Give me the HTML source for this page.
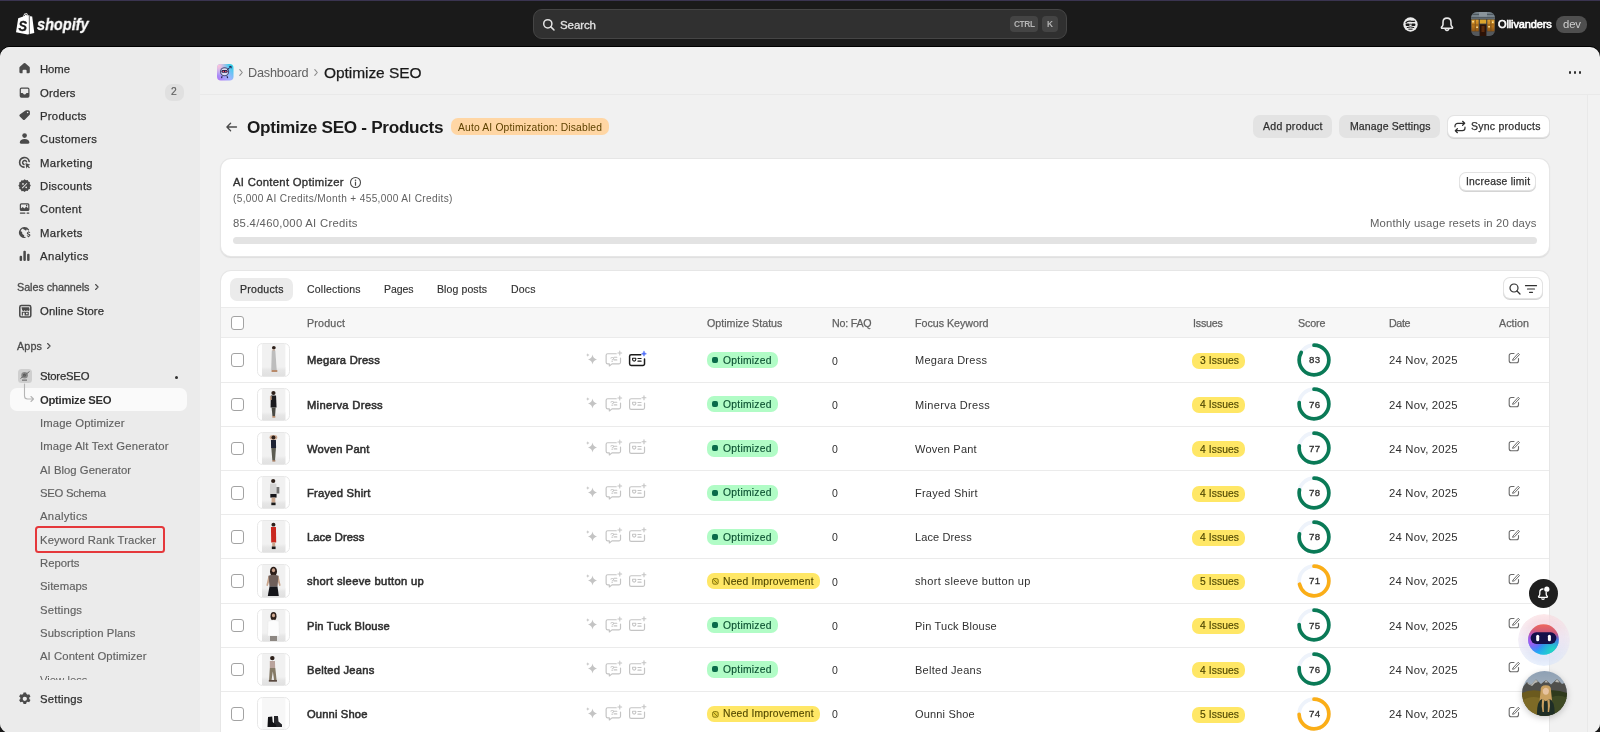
<!DOCTYPE html>
<html><head><meta charset="utf-8"><title>Optimize SEO</title>
<style>
html,body{margin:0;padding:0}
body{width:1600px;height:732px;overflow:hidden;background:#1a1a1a;position:relative;font-family:"Liberation Sans",sans-serif;}
.t{position:absolute;height:20px;line-height:20px;white-space:nowrap;will-change:transform;}
.a{position:absolute;}
svg{position:absolute;overflow:visible}
.cb{position:absolute;width:11px;height:11.5px;border:1px solid #a3a3a3;border-radius:3px;background:#fff;box-sizing:content-box}
.th{position:absolute;left:257px;width:31px;height:31.4px;border:1px solid #e8e8e8;border-radius:5.5px;background:#fff;overflow:hidden;box-sizing:content-box}
.bd{position:absolute;height:17px;border-radius:7px;}
.rl{position:absolute;left:221px;width:1328px;height:1px;background:#ebebeb}
</style></head>
<body>
<div class="a" style="left:0;top:0;width:1600px;height:1px;background:#3a3450"></div>
<svg style="left:15px;top:12px;will-change:transform" width="20" height="24" viewBox="0 0 20 24">
<path d="M3.2 6.2 L8.2 4.4 C8.6 2.2 9.8 1.0 11.0 1.0 C12.0 1.0 12.6 1.8 12.9 3.4 L14.2 3.1 L15.2 4.2 L17.2 4.5 L19.3 21.0 L12.6 22.5 L1.0 20.3 Z" fill="#fff"/>
<path d="M14.3 3.2 L14.4 22.1" stroke="#1a1a1a" stroke-width="0.7"/>
<path d="M9.3 4.0 C9.6 2.8 10.3 2.0 10.9 2.0 C11.4 2.0 11.8 2.6 11.9 3.3" stroke="#1a1a1a" stroke-width="0.8" fill="none"/>
<text transform="translate(3.6 18.6) scale(0.82 1)" font-family="Liberation Sans" font-weight="700" font-style="italic" font-size="15.5" fill="#1a1a1a" stroke="#1a1a1a" stroke-width=".4">S</text>
</svg>
<div class="t" id="t1" style="font-size:16.6px;color:#fff;top:14.60px;font-weight:700;left:37.00px;-webkit-text-stroke:0.3px #fff;font-style:italic;transform-origin:0 50%;transform:scaleX(0.875);">shopify</div>
<div class="a" style="left:533px;top:9px;width:532px;height:28.3px;background:#303030;border:1px solid #454545;border-radius:9px"></div>
<svg style="left:542px;top:17.7px" width="14" height="14" viewBox="0 0 14 14"><circle cx="5.8" cy="5.8" r="4.1" fill="none" stroke="#e3e3e3" stroke-width="1.5"/><path d="M8.9 8.9 L12 12" stroke="#e3e3e3" stroke-width="1.5" stroke-linecap="round"/></svg>
<div class="t" id="t2" style="font-size:11.5px;color:#e3e3e3;top:14.50px;left:560.00px;letter-spacing:-0.087px;-webkit-text-stroke:0.3px #e3e3e3;">Search</div>
<div class="a" style="left:1010px;top:16px;width:28px;height:16px;background:#444;border-radius:4px"></div>
<div class="a" style="left:1042px;top:16px;width:16px;height:16px;background:#444;border-radius:4px"></div>
<div class="t" id="t3" style="font-size:8.3px;color:#b5b5b5;top:14.30px;font-weight:700;left:1013.50px;letter-spacing:-0.375px;">CTRL</div>
<div class="t" id="t4" style="font-size:8.3px;color:#b5b5b5;top:14.30px;font-weight:700;left:1047.30px;">K</div>
<svg style="left:1402.5px;top:16.5px" width="15" height="15" viewBox="0 0 15 15">
<circle cx="7.500" cy="7.500" r="7.200" fill="#ececec"/>
<path d="M3 5.700 Q4.500 3.500 7.800 4.200 Q10.500 4.700 11.600 4.200" stroke="#1a1a1a" stroke-width="1.200" fill="none" stroke-linecap="round"/>
<rect x="2.600" y="6.500" width="4" height="2.500" rx="1" fill="#1a1a1a"/><rect x="8.400" y="6.500" width="4" height="2.500" rx="1" fill="#1a1a1a"/><path d="M6.600 7.200 H8.400" stroke="#1a1a1a" stroke-width=".8"/>
<path d="M3.800 10.600 Q7.500 9.300 11.200 10.600" stroke="#1a1a1a" stroke-width="1" fill="none"/><path d="M5.800 12.200 H9.200" stroke="#1a1a1a" stroke-width="1" stroke-linecap="round"/>
</svg>
<svg style="left:1439px;top:16px" width="16" height="17" viewBox="0 0 16 17">
<path d="M8 2.100 C5.500 2.100 4 3.900 4 6.200 V8.400 C4 9.500 3.300 10.300 2.600 11.100 C2.200 11.600 2.500 12.300 3.200 12.300 H12.800 C13.500 12.300 13.800 11.600 13.400 11.100 C12.700 10.300 12 9.500 12 8.400 V6.200 C12 3.900 10.500 2.100 8 2.100 Z" fill="none" stroke="#e8e8e8" stroke-width="1.550" stroke-linejoin="round"/>
<path d="M6.300 13.300 Q8 15.700 9.700 13.300" stroke="#e8e8e8" stroke-width="1.500" fill="none" stroke-linecap="round"/>
</svg>
<svg style="left:1471px;top:11.800px" width="24" height="24" viewBox="0 0 24 24"><defs><clipPath id="sac"><rect width="24" height="24" rx="6"/></clipPath>
<linearGradient id="wg" x1="0" y1="0" x2="0" y2="1"><stop offset="0" stop-color="#e0a030"/><stop offset=".5" stop-color="#c07a1a"/><stop offset="1" stop-color="#8a5214"/></linearGradient></defs>
<g clip-path="url(#sac)"><rect width="24" height="24" fill="#3a3f45"/>
<rect width="24" height="7" fill="#76828a"/><rect y="1.800" width="24" height="1.200" fill="#4e585f"/><rect y="5" width="24" height="1.600" fill="#515a61"/><rect x="8" y="0" width="8" height="4.500" fill="#8a949b"/>
<rect x=".5" y="7.600" width="7.200" height="12" fill="url(#wg)"/><rect x="16.300" y="7.600" width="7.200" height="12" fill="url(#wg)"/>
<rect x="8.800" y="7.600" width="6.400" height="4" fill="#dca42c"/><rect x="8.800" y="12.500" width="6.400" height="11.500" fill="#2c1206"/><rect x="10.500" y="14" width="3" height="6" fill="#5a2a0c"/>
<rect x="3.800" y="7.600" width=".8" height="12" fill="#6a4a20"/><rect x="19.500" y="7.600" width=".8" height="12" fill="#6a4a20"/><rect x=".5" y="12.500" width="7.200" height=".8" fill="#8a5a1c"/><rect x="16.300" y="12.500" width="7.200" height=".8" fill="#8a5a1c"/>
<rect x="1.300" y="9" width="1.500" height="1.500" fill="#ffe9a0"/><rect x="5.300" y="14.500" width="1.500" height="1.500" fill="#ffe9a0"/><rect x="17.300" y="14" width="1.500" height="1.500" fill="#ffe9a0"/><rect x="21" y="9.500" width="1.500" height="1.500" fill="#ffe9a0"/>
<rect x="0" y="19.600" width="8.200" height="4.400" fill="#54585c"/><rect x="15.800" y="19.600" width="8.200" height="4.400" fill="#54585c"/>
</g></svg>
<div class="t" id="t5" style="font-size:11px;color:#fff;top:13.60px;left:1498.30px;letter-spacing:-0.123px;-webkit-text-stroke:0.6px #fff;">Ollivanders</div>
<div class="a" style="left:1556.3px;top:16.2px;width:30.4px;height:16.5px;background:#4f4f4f;border-radius:8px"></div>
<div class="t" id="t6" style="font-size:11.3px;color:#cfcfcf;top:13.60px;left:1562.50px;letter-spacing:-0.109px;">dev</div>
<div class="a" style="left:0;top:46px;width:1600px;height:40px;background:#000;border-radius:10px 10px 0 0"></div>
<div class="a" style="left:0;top:47px;width:1600px;height:686.3px;background:#f1f1f1;border-radius:10px 10px 10px 10px;overflow:hidden">
<div class="a" style="left:0;top:0;width:200px;height:690px;background:#ebebeb"></div>
<div class="a" style="left:200px;top:47px;width:1400px;height:1px;background:#e9e9e9"></div>
<div class="a" style="left:1587px;top:48px;width:13px;height:645px;background:#f2f2f2;border-left:1px solid #e9e9e9"></div>
</div>
<svg style="left:16.40px;top:60.30px" width="17.2" height="17.2" viewBox="0 0 20 20" fill="#4a4a4a"><path d="M9.1 3.9 a1.4 1.4 0 0 1 1.8 0 l4.6 3.9 a1.6 1.6 0 0 1 .55 1.2 v4.9 a1.6 1.6 0 0 1-1.6 1.6 h-1.4 a.7.7 0 0 1-.7-.7 v-2.3 a1.3 1.3 0 0 0-1.3-1.3 h-2.1 a1.3 1.3 0 0 0-1.3 1.3 v2.3 a.7.7 0 0 1-.7.7 h-1.4 a1.6 1.6 0 0 1-1.6-1.6 v-4.9 a1.6 1.6 0 0 1 .55-1.2 Z"/></svg>
<div class="t" id="t7" style="font-size:11.3px;color:#303030;top:59.40px;left:40.00px;letter-spacing:-0.047px;-webkit-text-stroke:0.25px #303030;">Home</div>
<svg style="left:16.40px;top:83.60px" width="17.2" height="17.2" viewBox="0 0 20 20" fill="#4a4a4a"><path fill-rule="evenodd" d="M4.3 6 a2 2 0 0 1 2-2 h7.4 a2 2 0 0 1 2 2 v8 a2 2 0 0 1-2 2 h-7.4 a2 2 0 0 1-2-2 Z M5.7 6.2 v4.3 h1.9 a.8.8 0 0 1 .75.55 a1.7 1.7 0 0 0 3.3 0 a.8.8 0 0 1 .75-.55 h1.9 V6.2 a.8.8 0 0 0-.8-.8 h-7 a.8.8 0 0 0-.8.8 Z"/></svg>
<div class="t" id="t8" style="font-size:11.3px;color:#303030;top:82.70px;left:40.00px;letter-spacing:0.194px;-webkit-text-stroke:0.25px #303030;">Orders</div>
<svg style="left:16.40px;top:107.00px" width="17.2" height="17.2" viewBox="0 0 20 20" fill="#4a4a4a"><path fill-rule="evenodd" d="M10.6 4.4 a1.8 1.8 0 0 1 1.3-.55 h2.5 a1.8 1.8 0 0 1 1.8 1.8 v2.5 a1.8 1.8 0 0 1-.55 1.3 l-5.2 5.2 a1.8 1.8 0 0 1-2.5 0 l-3.5-3.5 a1.8 1.8 0 0 1 0-2.5 Z M13.5 7.4 a.9.9 0 1 0 0-1.8 a.9.9 0 0 0 0 1.8 Z"/></svg>
<div class="t" id="t9" style="font-size:11.3px;color:#303030;top:106.10px;left:40.00px;letter-spacing:0.272px;-webkit-text-stroke:0.25px #303030;">Products</div>
<svg style="left:16.40px;top:130.30px" width="17.2" height="17.2" viewBox="0 0 20 20" fill="#4a4a4a"><circle cx="10" cy="6.5" r="2.7"/><path d="M4.4 14.6 c0-2.6 2.4-4.1 5.6-4.1 s5.6 1.5 5.6 4.1 c0 .8-.6 1.4-1.4 1.4 h-8.4 c-.8 0-1.4-.6-1.4-1.4 Z"/></svg>
<div class="t" id="t10" style="font-size:11.3px;color:#303030;top:129.40px;left:40.00px;letter-spacing:0.297px;-webkit-text-stroke:0.25px #303030;">Customers</div>
<svg style="left:16.40px;top:153.60px" width="17.2" height="17.2" viewBox="0 0 20 20" fill="#4a4a4a"><path fill="none" stroke="#4a4a4a" stroke-width="1.9" stroke-linecap="round" d="M15.3 8.6 a5.6 5.6 0 1 0-6 6.7"/><path fill="none" stroke="#4a4a4a" stroke-width="1.7" stroke-linecap="round" d="M12.3 9 a2.4 2.4 0 1 0-3 3.2"/><path d="M11 10.6 l5.6 2 l-2.4 1.1 l2 2 l-1 1 l-2-2 l-1.1 2.4 Z"/></svg>
<div class="t" id="t11" style="font-size:11.3px;color:#303030;top:152.70px;left:40.00px;letter-spacing:0.361px;-webkit-text-stroke:0.25px #303030;">Marketing</div>
<svg style="left:16.40px;top:177.00px" width="17.2" height="17.2" viewBox="0 0 20 20" fill="#4a4a4a"><path transform="translate(10 10) scale(1.1) translate(-10 -10)" fill-rule="evenodd" d="M10 3.2 l1.5 1.1 l1.8-.25 l.7 1.7 l1.7.7 l-.25 1.8 L16.6 10 l-1.1 1.5 l.25 1.8 l-1.7.7 l-.7 1.7 l-1.8-.25 L10 16.8 l-1.5-1.1 l-1.8.25 l-.7-1.7 l-1.7-.7 l.25-1.8 L3.4 10 l1.1-1.5 l-.25-1.8 l1.7-.7 l.7-1.7 l1.8.25 Z M8.3 9.1 a.9.9 0 1 0 0-1.8 a.9.9 0 0 0 0 1.8 Z M11.7 12.7 a.9.9 0 1 0 0-1.8 a.9.9 0 0 0 0 1.8 Z M12.2 7.2 l.7.7 l-5.1 5.1 l-.7-.7 Z"/></svg>
<div class="t" id="t12" style="font-size:11.3px;color:#303030;top:176.10px;left:40.00px;letter-spacing:0.299px;-webkit-text-stroke:0.25px #303030;">Discounts</div>
<svg style="left:16.40px;top:200.30px" width="17.2" height="17.2" viewBox="0 0 20 20" fill="#4a4a4a"><path fill-rule="evenodd" d="M4.4 5.6 a1.8 1.8 0 0 1 1.8-1.8 h7.6 a1.8 1.8 0 0 1 1.8 1.8 v5.4 a1.8 1.8 0 0 1-1.8 1.8 h-7.6 a1.8 1.8 0 0 1-1.8-1.8 Z M5.8 9.9 l2-1.7 l2 1.7 l2.3-2.2 l2.1 2.2 v-4.1 a.6.6 0 0 0-.6-.6 h-7.2 a.6.6 0 0 0-.6.6 Z M12.4 7.2 a.8.8 0 1 0 0-1.6 a.8.8 0 0 0 0 1.6 Z"/><rect x="4.4" y="14.4" width="6.6" height="1.5" rx=".7"/><rect x="12.2" y="14.4" width="3.4" height="1.5" rx=".7"/></svg>
<div class="t" id="t13" style="font-size:11.3px;color:#303030;top:199.40px;left:40.00px;letter-spacing:0.320px;-webkit-text-stroke:0.25px #303030;">Content</div>
<svg style="left:16.40px;top:223.60px" width="17.2" height="17.2" viewBox="0 0 20 20" fill="#4a4a4a"><path fill-rule="evenodd" d="M9.6 3.6 a6.4 6.4 0 1 0 .9 12.75 a.7.7 0 0 0-.1-1.4 a5 5 0 0 1-.9.05 c-.3-.7.3-1.3 0-2 c-.3-.7-1.5-.8-2-1.5 c-.5-.7 0-1.6-.5-2.3 c-.3-.5-1-.7-1.7-.7 a5 5 0 0 1 2.8-3.2 c.2.6.6 1.1 1.3 1.2 c.9.1 1 .9 1.7 1 c.8.1 1.200-.6 1.4-1.5 a5 5 0 0 1 1.500 1.300 a.7.7 0 0 0 1.150-.8 A6.4 6.4 0 0 0 9.6 3.600 Z"/><path d="M14.300 8.300 v.700 c-.9.100-1.700.700-1.700 1.700 c0 1.100.9 1.500 1.800 1.700 c.7.200 1 .300 1 .700 c0 .400-.4.600-.9.600 c-.6 0-.9-.200-1.100-.700 l-1 .400 c.200.700.800 1.200 1.600 1.300 v.700 h1 v-.700 c1-.100 1.700-.800 1.700-1.700 c0-1.100-.9-1.500-1.800-1.700 c-.7-.200-1-.300-1-.700 c0-.300.300-.600.800-.600 s.8.200.9.600 l1-.400 c-.200-.600-.700-1.100-1.400-1.200 v-.700 Z"/></svg>
<div class="t" id="t14" style="font-size:11.3px;color:#303030;top:222.70px;left:40.00px;letter-spacing:0.385px;-webkit-text-stroke:0.25px #303030;">Markets</div>
<svg style="left:16.40px;top:247.00px" width="17.2" height="17.2" viewBox="0 0 20 20" fill="#4a4a4a"><rect x="4.200" y="10.300" width="2.900" height="6" rx="1.2"/><rect x="8.550" y="4.300" width="2.900" height="12" rx="1.2"/><rect x="12.900" y="7.800" width="2.900" height="8.500" rx="1.2"/></svg>
<div class="t" id="t15" style="font-size:11.3px;color:#303030;top:246.10px;left:40.00px;letter-spacing:0.410px;-webkit-text-stroke:0.25px #303030;">Analytics</div>
<div class="a" style="left:165px;top:84px;width:19px;height:17px;background:#e0e0e0;border-radius:7px"></div>
<div class="t" id="t16" style="font-size:10.3px;color:#616161;top:82.30px;left:171.30px;-webkit-text-stroke:0.2px #616161;">2</div>
<div class="t" id="t17" style="font-size:10.8px;color:#4a4a4a;top:277.00px;left:16.50px;letter-spacing:-0.056px;-webkit-text-stroke:0.3px #4a4a4a;">Sales channels</div>
<svg style="left:93px;top:283px" width="8" height="8" viewBox="0 0 8 8"><path d="M2.600 1.500 L5.100 4 L2.600 6.500" fill="none" stroke="#4a4a4a" stroke-width="1.100" stroke-linecap="round" stroke-linejoin="round"/></svg>
<svg style="left:14.70px;top:300.60px" width="20.6" height="20.6" viewBox="0 0 20 20" fill="#4a4a4a"><path fill-rule="evenodd" d="M3.900 6 a2.300 2.300 0 0 1 2.300-2.300 h7.600 a2.300 2.300 0 0 1 2.300 2.300 v8 a2.300 2.300 0 0 1-2.300 2.300 h-7.600 a2.300 2.300 0 0 1-2.300-2.300 Z M5.400 6 v8 a.8.8 0 0 0 .8.8 h7.600 a.8.8 0 0 0 .8-.8 v-8 a.8.8 0 0 0-.8-.8 h-7.600 a.8.8 0 0 0-.8.8 Z"/><path d="M6.300 6.100 h7.400 l.5 2.300 a1.250 1.250 0 0 1-2.450.300 a1.250 1.250 0 0 1-2.450 0 a1.250 1.250 0 0 1-2.450-.300 Z"/><path fill-rule="evenodd" d="M6.600 10.400 h6.800 v3.800 h-6.800 Z M7.700 11.400 v2.800 h1.600 v-2.800 Z M10.700 11.400 v1.500 h1.600 v-1.500 Z"/></svg>
<div class="t" id="t18" style="font-size:11.3px;color:#303030;top:301.00px;left:40.00px;letter-spacing:0.109px;-webkit-text-stroke:0.25px #303030;">Online Store</div>
<div class="t" id="t19" style="font-size:10.8px;color:#4a4a4a;top:336.00px;left:16.50px;letter-spacing:0.130px;-webkit-text-stroke:0.3px #4a4a4a;">Apps</div>
<svg style="left:45px;top:342px" width="8" height="8" viewBox="0 0 8 8"><path d="M2.600 1.500 L5.100 4 L2.600 6.500" fill="none" stroke="#4a4a4a" stroke-width="1.100" stroke-linecap="round" stroke-linejoin="round"/></svg>
<svg style="left:18px;top:369px" width="14" height="14" viewBox="0 0 14 14"><rect width="14" height="14" rx="3.500" fill="#cfcfcf"/><circle cx="6.600" cy="6.300" r="3.300" fill="#8a8a8a"/><circle cx="6.600" cy="6.100" r="1.700" fill="#5a5a5a"/><path d="M2.500 9.500 L11.500 2.500" stroke="#6a6a6a" stroke-width="1"/><rect x="4" y="10.500" width="5" height="1.300" fill="#777"/></svg>
<div class="t" id="t20" style="font-size:11.3px;color:#303030;top:366.00px;left:40.00px;letter-spacing:-0.194px;-webkit-text-stroke:0.25px #303030;">StoreSEO</div>
<div class="a" style="left:174.500px;top:375.700px;width:3px;height:3px;border-radius:2px;background:#303030"></div>
<div class="a" style="left:10px;top:388px;width:177px;height:23px;background:#fafafa;border-radius:7px"></div>
<svg style="left:20px;top:384px" width="16" height="20" viewBox="0 0 16 20"><path d="M4.500 0 V12 a3 3 0 0 0 3 3 H13.500 M11 12.500 L13.500 15 L11 17.500" fill="none" stroke="#b5b5b5" stroke-width="1.100" stroke-linecap="round" stroke-linejoin="round"/></svg>
<div class="t" id="t21" style="font-size:11.3px;color:#303030;top:389.50px;font-weight:700;left:40.00px;letter-spacing:-0.291px;">Optimize SEO</div>
<div class="t" id="t22" style="font-size:11.3px;color:#616161;top:413.10px;left:40.00px;letter-spacing:0.116px;-webkit-text-stroke:0.15px #616161;">Image Optimizer</div>
<div class="t" id="t23" style="font-size:11.3px;color:#616161;top:436.40px;left:40.00px;letter-spacing:0.162px;-webkit-text-stroke:0.15px #616161;">Image Alt Text Generator</div>
<div class="t" id="t24" style="font-size:11.3px;color:#616161;top:459.70px;left:40.00px;letter-spacing:0.035px;-webkit-text-stroke:0.15px #616161;">AI Blog Generator</div>
<div class="t" id="t25" style="font-size:11.3px;color:#616161;top:483.10px;left:40.00px;letter-spacing:-0.273px;-webkit-text-stroke:0.15px #616161;">SEO Schema</div>
<div class="t" id="t26" style="font-size:11.3px;color:#616161;top:506.40px;left:40.00px;letter-spacing:0.285px;-webkit-text-stroke:0.15px #616161;">Analytics</div>
<div class="t" id="t27" style="font-size:11.3px;color:#616161;top:529.70px;left:40.00px;letter-spacing:0.091px;-webkit-text-stroke:0.15px #616161;">Keyword Rank Tracker</div>
<div class="t" id="t28" style="font-size:11.3px;color:#616161;top:553.00px;left:40.00px;letter-spacing:-0.010px;-webkit-text-stroke:0.15px #616161;">Reports</div>
<div class="t" id="t29" style="font-size:11.3px;color:#616161;top:576.30px;left:40.00px;letter-spacing:0.058px;-webkit-text-stroke:0.15px #616161;">Sitemaps</div>
<div class="t" id="t30" style="font-size:11.3px;color:#616161;top:599.70px;left:40.00px;letter-spacing:0.167px;-webkit-text-stroke:0.15px #616161;">Settings</div>
<div class="t" id="t31" style="font-size:11.3px;color:#616161;top:623.00px;left:40.00px;letter-spacing:0.113px;-webkit-text-stroke:0.15px #616161;">Subscription Plans</div>
<div class="t" id="t32" style="font-size:11.3px;color:#616161;top:646.30px;left:40.00px;letter-spacing:0.086px;-webkit-text-stroke:0.15px #616161;">AI Content Optimizer</div>
<div class="a" style="left:40px;top:669.7px;width:80px;height:10.5px;overflow:hidden"><div class="t" style="left:0;top:0;font-size:11.3px;color:#616161">View less</div></div>
<div class="a" style="left:34.5px;top:526.3px;width:126.6px;height:22.6px;border:2.2px solid #e5383b;border-radius:3.5px"></div>
<svg style="left:15.20px;top:689.20px" width="19.6" height="19.6" viewBox="0 0 20 20" fill="#4a4a4a"><path fill-rule="evenodd" d="M8.700 3.500 h2.600 l.4 1.700 a5 5 0 0 1 1.100.65 l1.700-.5 l1.300 2.250 l-1.250 1.200 a5 5 0 0 1 0 1.300 l1.250 1.200 l-1.300 2.250 l-1.700-.5 a5 5 0 0 1-1.100.65 l-.4 1.700 h-2.600 l-.4-1.700 a5 5 0 0 1-1.100-.65 l-1.700.5 l-1.300-2.250 l1.250-1.200 a5 5 0 0 1 0-1.300 l-1.250-1.200 l1.300-2.250 l1.700.5 a5 5 0 0 1 1.100-.65 Z M10 12.200 a2.200 2.200 0 1 0 0-4.400 a2.200 2.200 0 0 0 0 4.400 Z"/></svg>
<div class="t" id="t33" style="font-size:11.3px;color:#303030;top:688.70px;left:40.00px;letter-spacing:0.239px;-webkit-text-stroke:0.25px #303030;">Settings</div>
<svg style="left:216.8px;top:64.2px" width="16.5" height="16.5" viewBox="0 0 17 17"><defs><linearGradient id="ag" x1="0" y1="1" x2="1" y2="0"><stop offset="0" stop-color="#b06cf2"/><stop offset=".45" stop-color="#9fb4ff"/><stop offset="1" stop-color="#1fd6e4"/></linearGradient><radialGradient id="ag2" cx="0.1" cy="0.1" r="0.6"><stop offset="0" stop-color="#ffc2d8"/><stop offset="1" stop-color="#ffc2d8" stop-opacity="0"/></radialGradient></defs>
<rect width="17" height="17" rx="4" fill="url(#ag)"/><rect width="17" height="17" rx="4" fill="url(#ag2)"/>
<circle cx="7.800" cy="8" r="4.700" fill="#4a4a78"/><circle cx="7.800" cy="8" r="3.600" fill="#d9dcf0"/><rect x="4.600" y="6.300" width="6.400" height="2.800" rx="1.400" fill="#1c1a4a"/><circle cx="6.500" cy="7.700" r=".8" fill="#ff5a6a"/><circle cx="9.100" cy="7.700" r=".8" fill="#ff5a6a"/>
<path d="M10.500 6 L14.500 2.600 M12.600 2.500 H14.600 V4.500" stroke="#26224f" stroke-width="1" fill="none"/><path d="M5.300 12.600 L4.600 14.600 M10.300 12.600 L11 14.600" stroke="#26224f" stroke-width="1.200"/></svg>
<svg style="left:237px;top:68px" width="8" height="9" viewBox="0 0 8 9"><path d="M2.800 1.700 L5.300 4.500 L2.800 7.300" fill="none" stroke="#8a8a8a" stroke-width="1.100" stroke-linecap="round" stroke-linejoin="round"/></svg>
<div class="t" id="t34" style="font-size:12.7px;color:#616161;top:63.00px;left:248.00px;letter-spacing:-0.197px;">Dashboard</div>
<svg style="left:312px;top:68px" width="8" height="9" viewBox="0 0 8 9"><path d="M2.800 1.700 L5.300 4.500 L2.800 7.300" fill="none" stroke="#8a8a8a" stroke-width="1.100" stroke-linecap="round" stroke-linejoin="round"/></svg>
<div class="t" id="t35" style="font-size:15.5px;color:#1a1a1a;top:62.50px;left:324.00px;letter-spacing:-0.064px;-webkit-text-stroke:0.25px #1a1a1a;">Optimize SEO</div>
<div class="a" style="left:1568.5px;top:71.300px;width:2.400px;height:2.400px;border-radius:2px;background:#303030"></div>
<div class="a" style="left:1573.5px;top:71.300px;width:2.400px;height:2.400px;border-radius:2px;background:#303030"></div>
<div class="a" style="left:1578.5px;top:71.300px;width:2.400px;height:2.400px;border-radius:2px;background:#303030"></div>
<svg style="left:225px;top:120.500px" width="13" height="12" viewBox="0 0 13 12"><path d="M11.500 6 H2 M5.600 2.300 L1.900 6 L5.600 9.700" fill="none" stroke="#4a4a4a" stroke-width="1.300" stroke-linecap="round" stroke-linejoin="round"/></svg>
<div class="t" id="t36" style="font-size:17.2px;color:#1a1a1a;top:116.80px;font-weight:700;left:247.00px;letter-spacing:-0.315px;">Optimize SEO - Products</div>
<div class="a" style="left:451px;top:117.500px;width:157.500px;height:17.500px;background:#ffd6a4;border-radius:7px"></div>
<div class="t" id="t37" style="font-size:10.3px;color:#5e4200;top:117.50px;left:457.50px;letter-spacing:0.169px;">Auto AI Optimization: Disabled</div>
<div class="a" style="left:1253px;top:115.2px;width:79px;height:22.7px;background:#e3e3e3;border-radius:7px"></div>
<div class="t" id="t38" style="font-size:10.5px;color:#303030;top:115.70px;left:1263.00px;letter-spacing:0.287px;-webkit-text-stroke:0.25px #303030;">Add product</div>
<div class="a" style="left:1338.9px;top:115.2px;width:101px;height:22.7px;background:#e3e3e3;border-radius:7px"></div>
<div class="t" id="t39" style="font-size:10.5px;color:#303030;top:115.70px;left:1349.50px;letter-spacing:0.121px;-webkit-text-stroke:0.25px #303030;">Manage Settings</div>
<div class="a" style="left:1448px;top:116.1px;width:101px;height:20.9px;background:#fff;border-radius:6px;box-shadow:0 0 0 1px #e3e3e3,0 1px 0 1px #d4d4d4"></div>
<svg style="left:1453px;top:119.500px" width="14" height="14" viewBox="0 0 14 14"><g fill="none" stroke="#303030" stroke-width="1.200" stroke-linecap="round" stroke-linejoin="round"><path d="M2 6.800 V6 a2.700 2.700 0 0 1 2.700-2.700 H11.500 M9.600 1.300 L11.700 3.300 L9.600 5.300"/><path d="M12 7.200 V8 a2.700 2.700 0 0 1-2.700 2.700 H2.500 M4.400 8.700 L2.300 10.700 L4.400 12.700"/></g></svg>
<div class="t" id="t40" style="font-size:10.5px;color:#303030;top:115.70px;left:1470.50px;letter-spacing:0.246px;-webkit-text-stroke:0.25px #303030;">Sync products</div>
<div class="a" style="left:221px;top:159px;width:1328px;height:96.500px;background:#fff;border-radius:10px;box-shadow:0 0 0 1px #e6e6e6,0 1px 1px 1px #dedede"></div>
<div class="t" id="t41" style="font-size:11.3px;color:#303030;top:172.00px;left:233.00px;letter-spacing:0.297px;-webkit-text-stroke:0.35px #303030;">AI Content Optimizer</div>
<svg style="left:348.500px;top:175.500px" width="13" height="13" viewBox="0 0 13 13"><circle cx="6.500" cy="6.500" r="5" fill="none" stroke="#4a4a4a" stroke-width="1.100"/><circle cx="6.500" cy="4.200" r=".8" fill="#4a4a4a"/><path d="M6.500 6 V9.200" stroke="#4a4a4a" stroke-width="1.200" stroke-linecap="round"/></svg>
<div class="t" id="t42" style="font-size:10.1px;color:#616161;top:188.90px;left:233.00px;letter-spacing:0.353px;">(5,000 AI Credits/Month + 455,000 AI Credits)</div>
<div class="t" id="t43" style="font-size:11.3px;color:#616161;top:213.30px;left:233.00px;letter-spacing:0.292px;">85.4/460,000 AI Credits</div>
<div class="a" style="left:1460.2px;top:173.4px;width:75.3px;height:17px;background:#fff;border-radius:6px;box-shadow:0 0 0 1px #e3e3e3,0 1px 0 1px #d4d4d4"></div>
<div class="t" id="t44" style="font-size:10.3px;color:#303030;top:171.70px;left:1466.00px;letter-spacing:0.257px;-webkit-text-stroke:0.25px #303030;">Increase limit</div>
<div class="t" id="t45" style="font-size:11.3px;color:#616161;top:213.20px;right:63.50px;letter-spacing:0.149px;">Monthly usage resets in 20 days</div>
<div class="a" style="left:233px;top:237px;width:1303.500px;height:6.500px;background:#e3e3e3;border-radius:3.500px"></div>
<div class="a" style="left:221px;top:271px;width:1328px;height:470px;background:#fff;border-radius:10px 10px 0 0;box-shadow:0 0 0 1px #e6e6e6"></div>
<div class="a" style="left:230px;top:278px;width:63px;height:23px;background:#ebebeb;border-radius:7px"></div>
<div class="t" id="t46" style="font-size:10.5px;color:#303030;top:279.20px;left:240.00px;letter-spacing:0.295px;-webkit-text-stroke:0.25px #303030;">Products</div>
<div class="t" id="t47" style="font-size:10.5px;color:#303030;top:279.20px;left:306.50px;letter-spacing:0.214px;-webkit-text-stroke:0.15px #303030;">Collections</div>
<div class="t" id="t48" style="font-size:10.5px;color:#303030;top:279.20px;left:384.00px;letter-spacing:-0.070px;-webkit-text-stroke:0.15px #303030;">Pages</div>
<div class="t" id="t49" style="font-size:10.5px;color:#303030;top:279.20px;left:437.00px;letter-spacing:0.108px;-webkit-text-stroke:0.15px #303030;">Blog posts</div>
<div class="t" id="t50" style="font-size:10.5px;color:#303030;top:279.20px;left:511.00px;letter-spacing:0.188px;-webkit-text-stroke:0.15px #303030;">Docs</div>
<div class="a" style="left:1504.2px;top:278.2px;width:37.6px;height:20.2px;background:#fff;border-radius:6px;box-shadow:0 0 0 1px #e3e3e3,0 1px 0 1px #d4d4d4"></div>
<svg style="left:1508px;top:282px" width="14" height="14" viewBox="0 0 14 14"><circle cx="6" cy="6" r="4" fill="none" stroke="#303030" stroke-width="1.200"/><path d="M9 9 L12 12" stroke="#303030" stroke-width="1.200" stroke-linecap="round"/></svg>
<svg style="left:1524px;top:282px" width="14" height="14" viewBox="0 0 14 14"><path d="M1.500 3.700 H12.500 M3.500 7 H10.500 M5.500 10.300 H8.500" stroke="#303030" stroke-width="1.200" stroke-linecap="round"/></svg>
<div class="a" style="left:221px;top:307px;width:1328px;height:31.2px;background:#f7f7f7;border-top:1px solid #ebebeb;border-bottom:1px solid #ebebeb;box-sizing:border-box"></div>
<div class="cb" style="left:231px;top:316px"></div>
<div class="t" id="t51" style="font-size:10.7px;color:#616161;top:313.20px;left:306.50px;letter-spacing:0.176px;-webkit-text-stroke:0.25px #616161;">Product</div>
<div class="t" id="t52" style="font-size:10.7px;color:#616161;top:313.20px;left:706.50px;letter-spacing:-0.003px;-webkit-text-stroke:0.25px #616161;">Optimize Status</div>
<div class="t" id="t53" style="font-size:10.7px;color:#616161;top:313.20px;left:831.50px;letter-spacing:-0.231px;-webkit-text-stroke:0.25px #616161;">No: FAQ</div>
<div class="t" id="t54" style="font-size:10.7px;color:#616161;top:313.20px;left:915.00px;letter-spacing:-0.021px;-webkit-text-stroke:0.25px #616161;">Focus Keyword</div>
<div class="t" id="t55" style="font-size:10.7px;color:#616161;top:313.20px;left:1192.50px;letter-spacing:-0.198px;-webkit-text-stroke:0.25px #616161;">Issues</div>
<div class="t" id="t56" style="font-size:10.7px;color:#616161;top:313.20px;left:1297.50px;letter-spacing:-0.130px;-webkit-text-stroke:0.25px #616161;">Score</div>
<div class="t" id="t57" style="font-size:10.7px;color:#616161;top:313.20px;left:1388.50px;letter-spacing:-0.393px;-webkit-text-stroke:0.25px #616161;">Date</div>
<div class="t" id="t58" style="font-size:10.7px;color:#616161;top:313.20px;left:1499.00px;letter-spacing:0.036px;-webkit-text-stroke:0.25px #616161;">Action</div>
<svg width="0" height="0" style="left:0;top:0"><defs><linearGradient id="fl" x1="0" y1="0" x2="0" y2="1"><stop offset="0" stop-color="#f1f1f1"/><stop offset=".35" stop-color="#e6e6e6"/><stop offset="1" stop-color="#e0e0e0"/></linearGradient></defs></svg>
<div class="cb" style="left:231px;top:353.40px"></div>
<div class="th" style="top:343.30px"><svg style="left:3.800px;top:0" width="23.400" height="31.400" viewBox="0 0 23.400 31.400"><rect width="23.400" height="31.400" fill="#f1f1f1"/><rect y="23" width="23.4" height="9" fill="url(#fl)"/><g transform="translate(11.700 0) scale(1.250 1) translate(-11.700 0)"><ellipse cx="11.8" cy="3.7" rx="1.5" ry="1.8" fill="#2e211b"/><rect x="10.7" y="5.5" width="2" height="6" fill="#c9a58c"/><path d="M10.2 6.6 L13 6.6 L14.1 26 L9.7 26 Z" fill="#bdbdbd"/><rect x="10" y="26" width="4.6" height="2" fill="#b88a6a"/></g></svg></div>
<div class="t" id="t59" style="font-size:11.2px;color:#303030;top:350.30px;left:306.70px;letter-spacing:0.230px;-webkit-text-stroke:0.55px #303030;">Megara Dress</div>
<svg style="left:585px;top:352.00px" width="14" height="14" viewBox="0 0 14 14" fill="#c4c4c4"><path d="M7.500 2.500 Q8 6.500 12 7.500 Q8 8.500 7.500 12.500 Q7 8.500 3 7.500 Q7 6.500 7.500 2.500 Z"/><path d="M2.800 1.200 Q3 2.800 4.600 3 Q3 3.200 2.800 4.800 Q2.600 3.200 1 3 Q2.600 2.800 2.800 1.200 Z"/></svg>
<svg style="left:604.4px;top:350.40px" width="19.2" height="19.2" viewBox="0 0 18 18" fill="none" stroke="#c4c4c4" stroke-width="1.100" stroke-linejoin="round" stroke-linecap="round"><path d="M11.500 3.500 H3.500 a1.500 1.500 0 0 0-1.500 1.500 v6.500 a1.500 1.500 0 0 0 1.500 1.500 h1.500 v2 l2.500-2 h6.500 a1.500 1.500 0 0 0 1.500-1.500 v-4"/><path d="M9.500 6.800 H12 M9.500 9.300 H12"/><path d="M14.800 1 V4.600 M13 2.800 H16.600" stroke-width="1"/></svg>
<div class="t" style="left:609.500px;top:349.50px;font-size:7.500px;color:#c4c4c4;font-weight:700">?</div>
<svg style="left:627.6px;top:350.60px" width="19.2" height="19.2" viewBox="0 0 18 18" fill="none" stroke="#1a1a1a" stroke-width="1.4" stroke-linejoin="round" stroke-linecap="round"><path d="M12 3.500 H3 a1.500 1.500 0 0 0-1.500 1.500 v7 a1.500 1.500 0 0 0 1.500 1.500 h11 a1.500 1.500 0 0 0 1.500-1.500 v-4.500"/><path d="M4.300 6.800 h3 v1.200 a1.500 1.500 0 0 1-3 0 Z M9.300 7 H12.300 M9.300 9.500 H12.300" stroke-width="1"/><path d="M15 0.300 Q15.300 2.300 17.300 2.600 Q15.300 2.900 15 4.900 Q14.700 2.900 12.700 2.600 Q14.700 2.300 15 0.300 Z" fill="#4f6ff7" stroke="#4f6ff7" stroke-width=".5"/></svg>
<div class="bd" style="left:706.7px;top:352.00px;width:71.4px;height:16.3px;background:#b1fcc6"></div>
<div class="a" style="left:711.500px;top:357.00px;width:6px;height:6px;border-radius:1.900px;background:#0a6b4a"></div>
<div class="t" id="t60" style="font-size:10.3px;color:#0c5132;top:350.70px;left:723.00px;letter-spacing:0.268px;-webkit-text-stroke:0.15px #0c5132;">Optimized</div>
<div class="t" id="t61" style="font-size:10.5px;color:#303030;top:350.50px;left:831.50px;">0</div>
<div class="t" id="t62" style="font-size:11.0px;color:#303030;top:350.30px;left:915.00px;letter-spacing:0.257px;">Megara Dress</div>
<div class="bd" style="left:1192.3px;top:352.90px;width:52.7px;height:16px;background:#ffe766"></div>
<div class="t" id="t63" style="font-size:10.3px;color:#4f4700;top:351.20px;left:1199.50px;letter-spacing:0.092px;-webkit-text-stroke:0.15px #4f4700;">3 Issues</div>
<svg style="left:1296.00px;top:342.00px" width="36" height="36" viewBox="0 0 36 36"><circle cx="18" cy="18" r="14.85" fill="none" stroke="#eef3fb" stroke-width="3.7"/><circle cx="18" cy="18" r="14.85" fill="none" stroke="#0a7a56" stroke-width="3.7" stroke-linecap="round" stroke-dasharray="77.44 93.31" transform="rotate(-90 18 18)"/></svg>
<div class="t" id="t64" style="font-size:9.7px;color:#303030;top:350.45px;left:1308.50px;letter-spacing:0.419px;-webkit-text-stroke:0.3px #303030;">83</div>
<div class="t" id="t65" style="font-size:11.3px;color:#303030;top:350.30px;left:1388.50px;letter-spacing:0.202px;">24 Nov, 2025</div>
<svg style="left:1507px;top:351.00px" width="14" height="14" viewBox="0 0 14 14" fill="none" stroke="#6a6a6a" stroke-width="1.100" stroke-linecap="round" stroke-linejoin="round"><path d="M7 2.500 H4.200 a2 2 0 0 0-2 2 v5.300 a2 2 0 0 0 2 2 h5.300 a2 2 0 0 0 2-2 V7.500"/><path d="M6.200 7.800 L11.200 2.300 L12.500 3.500 L7.500 8.800 L5.900 9.200 Z" stroke-width="1"/></svg>
<div class="rl" style="top:381.60px"></div>
<div class="cb" style="left:231px;top:397.60px"></div>
<div class="th" style="top:387.50px"><svg style="left:3.800px;top:0" width="23.400" height="31.400" viewBox="0 0 23.400 31.400"><rect width="23.400" height="31.400" fill="#f1f1f1"/><rect y="23" width="23.4" height="9" fill="url(#fl)"/><g transform="translate(11.700 0) scale(1.250 1) translate(-11.700 0)"><ellipse cx="11.5" cy="3.9" rx="1.7" ry="2" fill="#2e211b"/><path d="M9.4 6.5 L13.6 6.5 L14 18.5 L9.2 18.5 Z" fill="#1b1b1f"/><rect x="8.7" y="7" width="1.4" height="4" fill="#c9a58c"/><path d="M10 18.5 L13.3 18.5 L12.8 27 L10.7 27 Z" fill="#4a4a44"/><rect x="10.6" y="27" width="2.4" height="1.7" fill="#b88a6a"/></g></svg></div>
<div class="t" id="t66" style="font-size:11.2px;color:#303030;top:394.50px;left:306.70px;letter-spacing:0.298px;-webkit-text-stroke:0.55px #303030;">Minerva Dress</div>
<svg style="left:585px;top:396.20px" width="14" height="14" viewBox="0 0 14 14" fill="#c4c4c4"><path d="M7.500 2.500 Q8 6.500 12 7.500 Q8 8.500 7.500 12.500 Q7 8.500 3 7.500 Q7 6.500 7.500 2.500 Z"/><path d="M2.800 1.200 Q3 2.800 4.600 3 Q3 3.200 2.800 4.800 Q2.600 3.200 1 3 Q2.600 2.800 2.800 1.200 Z"/></svg>
<svg style="left:604.4px;top:394.60px" width="19.2" height="19.2" viewBox="0 0 18 18" fill="none" stroke="#c4c4c4" stroke-width="1.100" stroke-linejoin="round" stroke-linecap="round"><path d="M11.500 3.500 H3.500 a1.500 1.500 0 0 0-1.500 1.500 v6.500 a1.500 1.500 0 0 0 1.500 1.500 h1.500 v2 l2.500-2 h6.500 a1.500 1.500 0 0 0 1.500-1.500 v-4"/><path d="M9.500 6.800 H12 M9.500 9.300 H12"/><path d="M14.800 1 V4.600 M13 2.800 H16.600" stroke-width="1"/></svg>
<div class="t" style="left:609.500px;top:393.70px;font-size:7.500px;color:#c4c4c4;font-weight:700">?</div>
<svg style="left:627.6px;top:394.80px" width="19.2" height="19.2" viewBox="0 0 18 18" fill="none" stroke="#c4c4c4" stroke-width="1.1" stroke-linejoin="round" stroke-linecap="round"><path d="M12 3.500 H3 a1.500 1.500 0 0 0-1.500 1.500 v7 a1.500 1.500 0 0 0 1.500 1.500 h11 a1.500 1.500 0 0 0 1.500-1.500 v-4.500"/><path d="M4.300 6.800 h3 v1.200 a1.500 1.500 0 0 1-3 0 Z M9.300 7 H12.300 M9.300 9.500 H12.300" stroke-width="1"/><path d="M15 0.800 V4.400 M13.200 2.600 H16.800" stroke="#c4c4c4" stroke-width="1.100"/></svg>
<div class="bd" style="left:706.7px;top:396.20px;width:71.4px;height:16.3px;background:#b1fcc6"></div>
<div class="a" style="left:711.500px;top:401.20px;width:6px;height:6px;border-radius:1.900px;background:#0a6b4a"></div>
<div class="t" id="t67" style="font-size:10.3px;color:#0c5132;top:394.90px;left:723.00px;letter-spacing:0.268px;-webkit-text-stroke:0.15px #0c5132;">Optimized</div>
<div class="t" id="t68" style="font-size:10.5px;color:#303030;top:394.70px;left:831.50px;">0</div>
<div class="t" id="t69" style="font-size:11.0px;color:#303030;top:394.50px;left:915.00px;letter-spacing:0.324px;">Minerva Dress</div>
<div class="bd" style="left:1192.3px;top:397.10px;width:52.7px;height:16px;background:#ffe766"></div>
<div class="t" id="t70" style="font-size:10.3px;color:#4f4700;top:395.40px;left:1199.50px;letter-spacing:0.092px;-webkit-text-stroke:0.15px #4f4700;">4 Issues</div>
<svg style="left:1296.00px;top:386.20px" width="36" height="36" viewBox="0 0 36 36"><circle cx="18" cy="18" r="14.85" fill="none" stroke="#eef3fb" stroke-width="3.7"/><circle cx="18" cy="18" r="14.85" fill="none" stroke="#0a7a56" stroke-width="3.7" stroke-linecap="round" stroke-dasharray="70.91 93.31" transform="rotate(-90 18 18)"/></svg>
<div class="t" id="t71" style="font-size:9.7px;color:#303030;top:394.65px;left:1308.50px;letter-spacing:0.419px;-webkit-text-stroke:0.3px #303030;">76</div>
<div class="t" id="t72" style="font-size:11.3px;color:#303030;top:394.50px;left:1388.50px;letter-spacing:0.202px;">24 Nov, 2025</div>
<svg style="left:1507px;top:395.20px" width="14" height="14" viewBox="0 0 14 14" fill="none" stroke="#6a6a6a" stroke-width="1.100" stroke-linecap="round" stroke-linejoin="round"><path d="M7 2.500 H4.200 a2 2 0 0 0-2 2 v5.300 a2 2 0 0 0 2 2 h5.300 a2 2 0 0 0 2-2 V7.500"/><path d="M6.200 7.800 L11.200 2.300 L12.500 3.500 L7.500 8.800 L5.900 9.200 Z" stroke-width="1"/></svg>
<div class="rl" style="top:425.80px"></div>
<div class="cb" style="left:231px;top:441.80px"></div>
<div class="th" style="top:431.70px"><svg style="left:3.800px;top:0" width="23.400" height="31.400" viewBox="0 0 23.400 31.400"><rect width="23.400" height="31.400" fill="#f1f1f1"/><rect y="23" width="23.4" height="9" fill="url(#fl)"/><g transform="translate(11.700 0) scale(1.250 1) translate(-11.700 0)"><ellipse cx="11.5" cy="4.4" rx="3.1" ry="2.3" fill="#c9a58c"/><ellipse cx="11.5" cy="4.5" rx="1.6" ry="1.9" fill="#2e211b"/><path d="M9.5 7 L13.5 7 L13.6 15 L9.6 15 Z" fill="#1c2233"/><path d="M9.8 15 L13.5 15 L12.8 27 L10.6 27 Z" fill="#5c5c52"/><rect x="10.6" y="27" width="2.4" height="1.6" fill="#a07a60"/></g></svg></div>
<div class="t" id="t73" style="font-size:11.2px;color:#303030;top:438.70px;left:306.70px;letter-spacing:0.183px;-webkit-text-stroke:0.55px #303030;">Woven Pant</div>
<svg style="left:585px;top:440.40px" width="14" height="14" viewBox="0 0 14 14" fill="#c4c4c4"><path d="M7.500 2.500 Q8 6.500 12 7.500 Q8 8.500 7.500 12.500 Q7 8.500 3 7.500 Q7 6.500 7.500 2.500 Z"/><path d="M2.800 1.200 Q3 2.800 4.600 3 Q3 3.200 2.800 4.800 Q2.600 3.200 1 3 Q2.600 2.800 2.800 1.200 Z"/></svg>
<svg style="left:604.4px;top:438.80px" width="19.2" height="19.2" viewBox="0 0 18 18" fill="none" stroke="#c4c4c4" stroke-width="1.100" stroke-linejoin="round" stroke-linecap="round"><path d="M11.500 3.500 H3.500 a1.500 1.500 0 0 0-1.500 1.500 v6.500 a1.500 1.500 0 0 0 1.500 1.500 h1.500 v2 l2.500-2 h6.500 a1.500 1.500 0 0 0 1.500-1.500 v-4"/><path d="M9.500 6.800 H12 M9.500 9.300 H12"/><path d="M14.800 1 V4.600 M13 2.800 H16.600" stroke-width="1"/></svg>
<div class="t" style="left:609.500px;top:437.90px;font-size:7.500px;color:#c4c4c4;font-weight:700">?</div>
<svg style="left:627.6px;top:439.00px" width="19.2" height="19.2" viewBox="0 0 18 18" fill="none" stroke="#c4c4c4" stroke-width="1.1" stroke-linejoin="round" stroke-linecap="round"><path d="M12 3.500 H3 a1.500 1.500 0 0 0-1.500 1.500 v7 a1.500 1.500 0 0 0 1.500 1.500 h11 a1.500 1.500 0 0 0 1.500-1.500 v-4.500"/><path d="M4.300 6.800 h3 v1.200 a1.500 1.500 0 0 1-3 0 Z M9.300 7 H12.300 M9.300 9.500 H12.300" stroke-width="1"/><path d="M15 0.800 V4.400 M13.200 2.600 H16.800" stroke="#c4c4c4" stroke-width="1.100"/></svg>
<div class="bd" style="left:706.7px;top:440.40px;width:71.4px;height:16.3px;background:#b1fcc6"></div>
<div class="a" style="left:711.500px;top:445.40px;width:6px;height:6px;border-radius:1.900px;background:#0a6b4a"></div>
<div class="t" id="t74" style="font-size:10.3px;color:#0c5132;top:439.10px;left:723.00px;letter-spacing:0.268px;-webkit-text-stroke:0.15px #0c5132;">Optimized</div>
<div class="t" id="t75" style="font-size:10.5px;color:#303030;top:438.90px;left:831.50px;">0</div>
<div class="t" id="t76" style="font-size:11.0px;color:#303030;top:438.70px;left:915.00px;letter-spacing:0.207px;">Woven Pant</div>
<div class="bd" style="left:1192.3px;top:441.30px;width:52.7px;height:16px;background:#ffe766"></div>
<div class="t" id="t77" style="font-size:10.3px;color:#4f4700;top:439.60px;left:1199.50px;letter-spacing:0.092px;-webkit-text-stroke:0.15px #4f4700;">4 Issues</div>
<svg style="left:1296.00px;top:430.40px" width="36" height="36" viewBox="0 0 36 36"><circle cx="18" cy="18" r="14.85" fill="none" stroke="#eef3fb" stroke-width="3.7"/><circle cx="18" cy="18" r="14.85" fill="none" stroke="#0a7a56" stroke-width="3.7" stroke-linecap="round" stroke-dasharray="71.85 93.31" transform="rotate(-90 18 18)"/></svg>
<div class="t" id="t78" style="font-size:9.7px;color:#303030;top:438.85px;left:1308.50px;letter-spacing:0.419px;-webkit-text-stroke:0.3px #303030;">77</div>
<div class="t" id="t79" style="font-size:11.3px;color:#303030;top:438.70px;left:1388.50px;letter-spacing:0.202px;">24 Nov, 2025</div>
<svg style="left:1507px;top:439.40px" width="14" height="14" viewBox="0 0 14 14" fill="none" stroke="#6a6a6a" stroke-width="1.100" stroke-linecap="round" stroke-linejoin="round"><path d="M7 2.500 H4.200 a2 2 0 0 0-2 2 v5.300 a2 2 0 0 0 2 2 h5.300 a2 2 0 0 0 2-2 V7.500"/><path d="M6.200 7.800 L11.200 2.300 L12.500 3.500 L7.500 8.800 L5.900 9.200 Z" stroke-width="1"/></svg>
<div class="rl" style="top:470.00px"></div>
<div class="cb" style="left:231px;top:486.00px"></div>
<div class="th" style="top:475.90px"><svg style="left:3.800px;top:0" width="23.400" height="31.400" viewBox="0 0 23.400 31.400"><rect width="23.400" height="31.400" fill="#f1f1f1"/><rect y="23" width="23.4" height="9" fill="url(#fl)"/><g transform="translate(11.700 0) scale(1.250 1) translate(-11.700 0)"><ellipse cx="11.3" cy="3.9" rx="1.7" ry="2" fill="#2e211b"/><path d="M8.8 6.5 L13.8 6.5 L14.3 17 L8.6 17 Z" fill="#d3d3d3"/><rect x="14" y="10" width="2.200" height="6.5" fill="#707070"/><rect x="9" y="17" width="5" height="3.600" fill="#15151a"/><rect x="10" y="20.600" width="3" height="5" fill="#c9a58c"/><rect x="9.800" y="25.600" width="3.400" height="2.600" fill="#1a1a1a"/></g></svg></div>
<div class="t" id="t80" style="font-size:11.2px;color:#303030;top:482.90px;left:306.70px;letter-spacing:0.224px;-webkit-text-stroke:0.55px #303030;">Frayed Shirt</div>
<svg style="left:585px;top:484.60px" width="14" height="14" viewBox="0 0 14 14" fill="#c4c4c4"><path d="M7.500 2.500 Q8 6.500 12 7.500 Q8 8.500 7.500 12.500 Q7 8.500 3 7.500 Q7 6.500 7.500 2.500 Z"/><path d="M2.800 1.200 Q3 2.800 4.600 3 Q3 3.200 2.800 4.800 Q2.600 3.200 1 3 Q2.600 2.800 2.800 1.200 Z"/></svg>
<svg style="left:604.4px;top:483.00px" width="19.2" height="19.2" viewBox="0 0 18 18" fill="none" stroke="#c4c4c4" stroke-width="1.100" stroke-linejoin="round" stroke-linecap="round"><path d="M11.500 3.500 H3.500 a1.500 1.500 0 0 0-1.500 1.500 v6.500 a1.500 1.500 0 0 0 1.500 1.500 h1.500 v2 l2.500-2 h6.500 a1.500 1.500 0 0 0 1.500-1.500 v-4"/><path d="M9.500 6.800 H12 M9.500 9.300 H12"/><path d="M14.800 1 V4.600 M13 2.800 H16.600" stroke-width="1"/></svg>
<div class="t" style="left:609.500px;top:482.10px;font-size:7.500px;color:#c4c4c4;font-weight:700">?</div>
<svg style="left:627.6px;top:483.20px" width="19.2" height="19.2" viewBox="0 0 18 18" fill="none" stroke="#c4c4c4" stroke-width="1.1" stroke-linejoin="round" stroke-linecap="round"><path d="M12 3.500 H3 a1.500 1.500 0 0 0-1.500 1.500 v7 a1.500 1.500 0 0 0 1.500 1.500 h11 a1.500 1.500 0 0 0 1.500-1.500 v-4.500"/><path d="M4.300 6.800 h3 v1.200 a1.500 1.500 0 0 1-3 0 Z M9.300 7 H12.300 M9.300 9.500 H12.300" stroke-width="1"/><path d="M15 0.800 V4.400 M13.200 2.600 H16.800" stroke="#c4c4c4" stroke-width="1.100"/></svg>
<div class="bd" style="left:706.7px;top:484.60px;width:71.4px;height:16.3px;background:#b1fcc6"></div>
<div class="a" style="left:711.500px;top:489.60px;width:6px;height:6px;border-radius:1.900px;background:#0a6b4a"></div>
<div class="t" id="t81" style="font-size:10.3px;color:#0c5132;top:483.30px;left:723.00px;letter-spacing:0.268px;-webkit-text-stroke:0.15px #0c5132;">Optimized</div>
<div class="t" id="t82" style="font-size:10.5px;color:#303030;top:483.10px;left:831.50px;">0</div>
<div class="t" id="t83" style="font-size:11.0px;color:#303030;top:482.90px;left:915.00px;letter-spacing:0.243px;">Frayed Shirt</div>
<div class="bd" style="left:1192.3px;top:485.50px;width:52.7px;height:16px;background:#ffe766"></div>
<div class="t" id="t84" style="font-size:10.3px;color:#4f4700;top:483.80px;left:1199.50px;letter-spacing:0.092px;-webkit-text-stroke:0.15px #4f4700;">4 Issues</div>
<svg style="left:1296.00px;top:474.60px" width="36" height="36" viewBox="0 0 36 36"><circle cx="18" cy="18" r="14.85" fill="none" stroke="#eef3fb" stroke-width="3.7"/><circle cx="18" cy="18" r="14.85" fill="none" stroke="#0a7a56" stroke-width="3.7" stroke-linecap="round" stroke-dasharray="72.78 93.31" transform="rotate(-90 18 18)"/></svg>
<div class="t" id="t85" style="font-size:9.7px;color:#303030;top:483.05px;left:1308.50px;letter-spacing:0.419px;-webkit-text-stroke:0.3px #303030;">78</div>
<div class="t" id="t86" style="font-size:11.3px;color:#303030;top:482.90px;left:1388.50px;letter-spacing:0.202px;">24 Nov, 2025</div>
<svg style="left:1507px;top:483.60px" width="14" height="14" viewBox="0 0 14 14" fill="none" stroke="#6a6a6a" stroke-width="1.100" stroke-linecap="round" stroke-linejoin="round"><path d="M7 2.500 H4.200 a2 2 0 0 0-2 2 v5.300 a2 2 0 0 0 2 2 h5.300 a2 2 0 0 0 2-2 V7.500"/><path d="M6.200 7.800 L11.200 2.300 L12.500 3.500 L7.500 8.800 L5.900 9.200 Z" stroke-width="1"/></svg>
<div class="rl" style="top:514.20px"></div>
<div class="cb" style="left:231px;top:530.20px"></div>
<div class="th" style="top:520.10px"><svg style="left:3.800px;top:0" width="23.400" height="31.400" viewBox="0 0 23.400 31.400"><rect width="23.400" height="31.400" fill="#f1f1f1"/><rect y="23" width="23.4" height="9" fill="url(#fl)"/><g transform="translate(11.700 0) scale(1.250 1) translate(-11.700 0)"><ellipse cx="11.5" cy="3.700" rx="1.600" ry="1.900" fill="#2e211b"/><path d="M9.500 6 L13.500 6 L13.700 21.500 L9.700 21.500 Z" fill="#c9281f"/><rect x="10.500" y="21.500" width="2.400" height="4" fill="#c9a58c"/><rect x="10.200" y="25.500" width="3" height="2.600" fill="#1a1a1a"/></g></svg></div>
<div class="t" id="t87" style="font-size:11.2px;color:#303030;top:527.10px;left:306.70px;letter-spacing:0.090px;-webkit-text-stroke:0.55px #303030;">Lace Dress</div>
<svg style="left:585px;top:528.80px" width="14" height="14" viewBox="0 0 14 14" fill="#c4c4c4"><path d="M7.500 2.500 Q8 6.500 12 7.500 Q8 8.500 7.500 12.500 Q7 8.500 3 7.500 Q7 6.500 7.500 2.500 Z"/><path d="M2.800 1.200 Q3 2.800 4.600 3 Q3 3.200 2.800 4.800 Q2.600 3.200 1 3 Q2.600 2.800 2.800 1.200 Z"/></svg>
<svg style="left:604.4px;top:527.20px" width="19.2" height="19.2" viewBox="0 0 18 18" fill="none" stroke="#c4c4c4" stroke-width="1.100" stroke-linejoin="round" stroke-linecap="round"><path d="M11.500 3.500 H3.500 a1.500 1.500 0 0 0-1.500 1.500 v6.500 a1.500 1.500 0 0 0 1.500 1.500 h1.500 v2 l2.500-2 h6.500 a1.500 1.500 0 0 0 1.500-1.500 v-4"/><path d="M9.500 6.800 H12 M9.500 9.300 H12"/><path d="M14.800 1 V4.600 M13 2.800 H16.600" stroke-width="1"/></svg>
<div class="t" style="left:609.500px;top:526.30px;font-size:7.500px;color:#c4c4c4;font-weight:700">?</div>
<svg style="left:627.6px;top:527.40px" width="19.2" height="19.2" viewBox="0 0 18 18" fill="none" stroke="#c4c4c4" stroke-width="1.1" stroke-linejoin="round" stroke-linecap="round"><path d="M12 3.500 H3 a1.500 1.500 0 0 0-1.500 1.500 v7 a1.500 1.500 0 0 0 1.500 1.500 h11 a1.500 1.500 0 0 0 1.500-1.500 v-4.500"/><path d="M4.300 6.800 h3 v1.200 a1.500 1.500 0 0 1-3 0 Z M9.300 7 H12.300 M9.300 9.500 H12.300" stroke-width="1"/><path d="M15 0.800 V4.400 M13.200 2.600 H16.800" stroke="#c4c4c4" stroke-width="1.100"/></svg>
<div class="bd" style="left:706.7px;top:528.80px;width:71.4px;height:16.3px;background:#b1fcc6"></div>
<div class="a" style="left:711.500px;top:533.80px;width:6px;height:6px;border-radius:1.900px;background:#0a6b4a"></div>
<div class="t" id="t88" style="font-size:10.3px;color:#0c5132;top:527.50px;left:723.00px;letter-spacing:0.268px;-webkit-text-stroke:0.15px #0c5132;">Optimized</div>
<div class="t" id="t89" style="font-size:10.5px;color:#303030;top:527.30px;left:831.50px;">0</div>
<div class="t" id="t90" style="font-size:11.0px;color:#303030;top:527.10px;left:915.00px;letter-spacing:0.118px;">Lace Dress</div>
<div class="bd" style="left:1192.3px;top:529.70px;width:52.7px;height:16px;background:#ffe766"></div>
<div class="t" id="t91" style="font-size:10.3px;color:#4f4700;top:528.00px;left:1199.50px;letter-spacing:0.092px;-webkit-text-stroke:0.15px #4f4700;">4 Issues</div>
<svg style="left:1296.00px;top:518.80px" width="36" height="36" viewBox="0 0 36 36"><circle cx="18" cy="18" r="14.85" fill="none" stroke="#eef3fb" stroke-width="3.7"/><circle cx="18" cy="18" r="14.85" fill="none" stroke="#0a7a56" stroke-width="3.7" stroke-linecap="round" stroke-dasharray="72.78 93.31" transform="rotate(-90 18 18)"/></svg>
<div class="t" id="t92" style="font-size:9.7px;color:#303030;top:527.25px;left:1308.50px;letter-spacing:0.419px;-webkit-text-stroke:0.3px #303030;">78</div>
<div class="t" id="t93" style="font-size:11.3px;color:#303030;top:527.10px;left:1388.50px;letter-spacing:0.202px;">24 Nov, 2025</div>
<svg style="left:1507px;top:527.80px" width="14" height="14" viewBox="0 0 14 14" fill="none" stroke="#6a6a6a" stroke-width="1.100" stroke-linecap="round" stroke-linejoin="round"><path d="M7 2.500 H4.200 a2 2 0 0 0-2 2 v5.300 a2 2 0 0 0 2 2 h5.300 a2 2 0 0 0 2-2 V7.500"/><path d="M6.200 7.800 L11.200 2.300 L12.500 3.500 L7.500 8.800 L5.900 9.200 Z" stroke-width="1"/></svg>
<div class="rl" style="top:558.40px"></div>
<div class="cb" style="left:231px;top:574.40px"></div>
<div class="th" style="top:564.30px"><svg style="left:3.800px;top:0" width="23.400" height="31.400" viewBox="0 0 23.400 31.400"><rect width="23.400" height="31.400" fill="#f1f1f1"/><rect y="23" width="23.4" height="9" fill="url(#fl)"/><ellipse cx="11.500" cy="6.500" rx="3.500" ry="4.800" fill="#2b1d18"/><ellipse cx="11.500" cy="5.200" rx="1.600" ry="2" fill="#c9a08a"/><path d="M6.500 10.800 L4.300 20.500 L5.800 21 L8.300 13 Z M16.500 10.800 L18.700 20.500 L17.200 21 L14.700 13 Z" fill="#c9a58c"/><path d="M6.500 10.800 Q11.500 8.800 16.500 10.800 L15.500 21.500 L7.500 21.500 Z" fill="#6f5f5a"/><path d="M7.500 21.500 L15.500 21.500 L16.800 31 L5.800 31 Z" fill="#15151a"/></svg></div>
<div class="t" id="t94" style="font-size:11.2px;color:#303030;top:571.30px;left:306.70px;letter-spacing:0.319px;-webkit-text-stroke:0.55px #303030;">short sleeve button up</div>
<svg style="left:585px;top:573.00px" width="14" height="14" viewBox="0 0 14 14" fill="#c4c4c4"><path d="M7.500 2.500 Q8 6.500 12 7.500 Q8 8.500 7.500 12.500 Q7 8.500 3 7.500 Q7 6.500 7.500 2.500 Z"/><path d="M2.800 1.200 Q3 2.800 4.600 3 Q3 3.200 2.800 4.800 Q2.600 3.200 1 3 Q2.600 2.800 2.800 1.200 Z"/></svg>
<svg style="left:604.4px;top:571.40px" width="19.2" height="19.2" viewBox="0 0 18 18" fill="none" stroke="#c4c4c4" stroke-width="1.100" stroke-linejoin="round" stroke-linecap="round"><path d="M11.500 3.500 H3.500 a1.500 1.500 0 0 0-1.500 1.500 v6.500 a1.500 1.500 0 0 0 1.500 1.500 h1.500 v2 l2.500-2 h6.500 a1.500 1.500 0 0 0 1.500-1.500 v-4"/><path d="M9.500 6.800 H12 M9.500 9.300 H12"/><path d="M14.800 1 V4.600 M13 2.800 H16.600" stroke-width="1"/></svg>
<div class="t" style="left:609.500px;top:570.50px;font-size:7.500px;color:#c4c4c4;font-weight:700">?</div>
<svg style="left:627.6px;top:571.60px" width="19.2" height="19.2" viewBox="0 0 18 18" fill="none" stroke="#c4c4c4" stroke-width="1.1" stroke-linejoin="round" stroke-linecap="round"><path d="M12 3.500 H3 a1.500 1.500 0 0 0-1.500 1.500 v7 a1.500 1.500 0 0 0 1.500 1.500 h11 a1.500 1.500 0 0 0 1.500-1.500 v-4.500"/><path d="M4.300 6.800 h3 v1.200 a1.500 1.500 0 0 1-3 0 Z M9.300 7 H12.300 M9.300 9.500 H12.300" stroke-width="1"/><path d="M15 0.800 V4.400 M13.200 2.600 H16.800" stroke="#c4c4c4" stroke-width="1.100"/></svg>
<div class="bd" style="left:706.7px;top:573.00px;width:113.4px;height:16.3px;background:#ffe766"></div>
<svg style="left:711.6px;top:577.90px" width="7" height="7" viewBox="0 0 7 7"><rect x=".6" y=".6" width="5.6" height="5.600" rx="1.600" fill="#e9cf3f" stroke="#8a7a10" stroke-width="1"/><path d="M1.300 1.300 L5.700 5.700" stroke="#8a7a10" stroke-width="1"/></svg>
<div class="t" id="t95" style="font-size:10.3px;color:#554b00;top:571.70px;left:723.00px;letter-spacing:0.195px;-webkit-text-stroke:0.15px #554b00;">Need Improvement</div>
<div class="t" id="t96" style="font-size:10.5px;color:#303030;top:571.50px;left:831.50px;">0</div>
<div class="t" id="t97" style="font-size:11.0px;color:#303030;top:571.30px;left:915.00px;letter-spacing:0.340px;">short sleeve button up</div>
<div class="bd" style="left:1192.3px;top:573.90px;width:52.7px;height:16px;background:#ffe766"></div>
<div class="t" id="t98" style="font-size:10.3px;color:#4f4700;top:572.20px;left:1199.50px;letter-spacing:0.092px;-webkit-text-stroke:0.15px #4f4700;">5 Issues</div>
<svg style="left:1296.00px;top:563.00px" width="36" height="36" viewBox="0 0 36 36"><circle cx="18" cy="18" r="14.85" fill="none" stroke="#eef3fb" stroke-width="3.7"/><circle cx="18" cy="18" r="14.85" fill="none" stroke="#fbae17" stroke-width="3.7" stroke-linecap="round" stroke-dasharray="66.25 93.31" transform="rotate(-90 18 18)"/></svg>
<div class="t" id="t99" style="font-size:9.7px;color:#303030;top:571.45px;left:1308.50px;letter-spacing:0.419px;-webkit-text-stroke:0.3px #303030;">71</div>
<div class="t" id="t100" style="font-size:11.3px;color:#303030;top:571.30px;left:1388.50px;letter-spacing:0.202px;">24 Nov, 2025</div>
<svg style="left:1507px;top:572.00px" width="14" height="14" viewBox="0 0 14 14" fill="none" stroke="#6a6a6a" stroke-width="1.100" stroke-linecap="round" stroke-linejoin="round"><path d="M7 2.500 H4.200 a2 2 0 0 0-2 2 v5.300 a2 2 0 0 0 2 2 h5.300 a2 2 0 0 0 2-2 V7.500"/><path d="M6.200 7.800 L11.200 2.300 L12.500 3.500 L7.500 8.800 L5.900 9.200 Z" stroke-width="1"/></svg>
<div class="rl" style="top:602.60px"></div>
<div class="cb" style="left:231px;top:618.60px"></div>
<div class="th" style="top:608.50px"><svg style="left:3.800px;top:0" width="23.400" height="31.400" viewBox="0 0 23.400 31.400"><rect width="23.400" height="31.400" fill="#f1f1f1"/><rect y="23" width="23.4" height="9" fill="url(#fl)"/><ellipse cx="11.500" cy="6.200" rx="3" ry="4.200" fill="#2e211b"/><ellipse cx="11.500" cy="5.400" rx="1.500" ry="1.900" fill="#d2ac94"/><path d="M6 11.200 Q11.500 8.800 17 11.200 L17.500 26 L5.500 26 Z" fill="#fcfcfc" stroke="#e4e4e4" stroke-width=".5"/><rect x="8" y="26" width="7" height="5" fill="#8d8782"/></svg></div>
<div class="t" id="t101" style="font-size:11.2px;color:#303030;top:615.50px;left:306.70px;letter-spacing:0.177px;-webkit-text-stroke:0.55px #303030;">Pin Tuck Blouse</div>
<svg style="left:585px;top:617.20px" width="14" height="14" viewBox="0 0 14 14" fill="#c4c4c4"><path d="M7.500 2.500 Q8 6.500 12 7.500 Q8 8.500 7.500 12.500 Q7 8.500 3 7.500 Q7 6.500 7.500 2.500 Z"/><path d="M2.800 1.200 Q3 2.800 4.600 3 Q3 3.200 2.800 4.800 Q2.600 3.200 1 3 Q2.600 2.800 2.800 1.200 Z"/></svg>
<svg style="left:604.4px;top:615.60px" width="19.2" height="19.2" viewBox="0 0 18 18" fill="none" stroke="#c4c4c4" stroke-width="1.100" stroke-linejoin="round" stroke-linecap="round"><path d="M11.500 3.500 H3.500 a1.500 1.500 0 0 0-1.500 1.500 v6.500 a1.500 1.500 0 0 0 1.500 1.500 h1.500 v2 l2.500-2 h6.500 a1.500 1.500 0 0 0 1.500-1.500 v-4"/><path d="M9.500 6.800 H12 M9.500 9.300 H12"/><path d="M14.800 1 V4.600 M13 2.800 H16.600" stroke-width="1"/></svg>
<div class="t" style="left:609.500px;top:614.70px;font-size:7.500px;color:#c4c4c4;font-weight:700">?</div>
<svg style="left:627.6px;top:615.80px" width="19.2" height="19.2" viewBox="0 0 18 18" fill="none" stroke="#c4c4c4" stroke-width="1.1" stroke-linejoin="round" stroke-linecap="round"><path d="M12 3.500 H3 a1.500 1.500 0 0 0-1.500 1.500 v7 a1.500 1.500 0 0 0 1.500 1.500 h11 a1.500 1.500 0 0 0 1.500-1.500 v-4.500"/><path d="M4.300 6.800 h3 v1.200 a1.500 1.500 0 0 1-3 0 Z M9.300 7 H12.300 M9.300 9.500 H12.300" stroke-width="1"/><path d="M15 0.800 V4.400 M13.200 2.600 H16.800" stroke="#c4c4c4" stroke-width="1.100"/></svg>
<div class="bd" style="left:706.7px;top:617.20px;width:71.4px;height:16.3px;background:#b1fcc6"></div>
<div class="a" style="left:711.500px;top:622.20px;width:6px;height:6px;border-radius:1.900px;background:#0a6b4a"></div>
<div class="t" id="t102" style="font-size:10.3px;color:#0c5132;top:615.90px;left:723.00px;letter-spacing:0.268px;-webkit-text-stroke:0.15px #0c5132;">Optimized</div>
<div class="t" id="t103" style="font-size:10.5px;color:#303030;top:615.70px;left:831.50px;">0</div>
<div class="t" id="t104" style="font-size:11.0px;color:#303030;top:615.50px;left:915.00px;letter-spacing:0.202px;">Pin Tuck Blouse</div>
<div class="bd" style="left:1192.3px;top:618.10px;width:52.7px;height:16px;background:#ffe766"></div>
<div class="t" id="t105" style="font-size:10.3px;color:#4f4700;top:616.40px;left:1199.50px;letter-spacing:0.092px;-webkit-text-stroke:0.15px #4f4700;">4 Issues</div>
<svg style="left:1296.00px;top:607.20px" width="36" height="36" viewBox="0 0 36 36"><circle cx="18" cy="18" r="14.85" fill="none" stroke="#eef3fb" stroke-width="3.7"/><circle cx="18" cy="18" r="14.85" fill="none" stroke="#0a7a56" stroke-width="3.7" stroke-linecap="round" stroke-dasharray="69.98 93.31" transform="rotate(-90 18 18)"/></svg>
<div class="t" id="t106" style="font-size:9.7px;color:#303030;top:615.65px;left:1308.50px;letter-spacing:0.419px;-webkit-text-stroke:0.3px #303030;">75</div>
<div class="t" id="t107" style="font-size:11.3px;color:#303030;top:615.50px;left:1388.50px;letter-spacing:0.202px;">24 Nov, 2025</div>
<svg style="left:1507px;top:616.20px" width="14" height="14" viewBox="0 0 14 14" fill="none" stroke="#6a6a6a" stroke-width="1.100" stroke-linecap="round" stroke-linejoin="round"><path d="M7 2.500 H4.200 a2 2 0 0 0-2 2 v5.300 a2 2 0 0 0 2 2 h5.300 a2 2 0 0 0 2-2 V7.500"/><path d="M6.200 7.800 L11.200 2.300 L12.500 3.500 L7.500 8.800 L5.900 9.200 Z" stroke-width="1"/></svg>
<div class="rl" style="top:646.80px"></div>
<div class="cb" style="left:231px;top:662.80px"></div>
<div class="th" style="top:652.70px"><svg style="left:3.800px;top:0" width="23.400" height="31.400" viewBox="0 0 23.400 31.400"><rect width="23.400" height="31.400" fill="#f1f1f1"/><rect y="23" width="23.4" height="9" fill="url(#fl)"/><g transform="translate(11.700 0) scale(1.250 1) translate(-11.700 0)"><ellipse cx="10.600" cy="4.100" rx="1.800" ry="2.200" fill="#2e211b"/><path d="M8.600 7 L12.700 7 L12.900 14 L8.600 14 Z" fill="#b9a39c"/><path d="M8.600 14 L13 14 L14 26 L12 26 L11 17.500 L10 26 L8 26 Z" fill="#857a66"/><rect x="7.800" y="26" width="6.500" height="1.700" fill="#5a4a40"/></g></svg></div>
<div class="t" id="t108" style="font-size:11.2px;color:#303030;top:659.70px;left:306.70px;letter-spacing:0.237px;-webkit-text-stroke:0.55px #303030;">Belted Jeans</div>
<svg style="left:585px;top:661.40px" width="14" height="14" viewBox="0 0 14 14" fill="#c4c4c4"><path d="M7.500 2.500 Q8 6.500 12 7.500 Q8 8.500 7.500 12.500 Q7 8.500 3 7.500 Q7 6.500 7.500 2.500 Z"/><path d="M2.800 1.200 Q3 2.800 4.600 3 Q3 3.200 2.800 4.800 Q2.600 3.200 1 3 Q2.600 2.800 2.800 1.200 Z"/></svg>
<svg style="left:604.4px;top:659.80px" width="19.2" height="19.2" viewBox="0 0 18 18" fill="none" stroke="#c4c4c4" stroke-width="1.100" stroke-linejoin="round" stroke-linecap="round"><path d="M11.500 3.500 H3.500 a1.500 1.500 0 0 0-1.500 1.500 v6.500 a1.500 1.500 0 0 0 1.500 1.500 h1.500 v2 l2.500-2 h6.500 a1.500 1.500 0 0 0 1.500-1.500 v-4"/><path d="M9.500 6.800 H12 M9.500 9.300 H12"/><path d="M14.800 1 V4.600 M13 2.800 H16.600" stroke-width="1"/></svg>
<div class="t" style="left:609.500px;top:658.90px;font-size:7.500px;color:#c4c4c4;font-weight:700">?</div>
<svg style="left:627.6px;top:660.00px" width="19.2" height="19.2" viewBox="0 0 18 18" fill="none" stroke="#c4c4c4" stroke-width="1.1" stroke-linejoin="round" stroke-linecap="round"><path d="M12 3.500 H3 a1.500 1.500 0 0 0-1.500 1.500 v7 a1.500 1.500 0 0 0 1.500 1.500 h11 a1.500 1.500 0 0 0 1.500-1.500 v-4.500"/><path d="M4.300 6.800 h3 v1.200 a1.500 1.500 0 0 1-3 0 Z M9.300 7 H12.300 M9.300 9.500 H12.300" stroke-width="1"/><path d="M15 0.800 V4.400 M13.200 2.600 H16.800" stroke="#c4c4c4" stroke-width="1.100"/></svg>
<div class="bd" style="left:706.7px;top:661.40px;width:71.4px;height:16.3px;background:#b1fcc6"></div>
<div class="a" style="left:711.500px;top:666.40px;width:6px;height:6px;border-radius:1.900px;background:#0a6b4a"></div>
<div class="t" id="t109" style="font-size:10.3px;color:#0c5132;top:660.10px;left:723.00px;letter-spacing:0.268px;-webkit-text-stroke:0.15px #0c5132;">Optimized</div>
<div class="t" id="t110" style="font-size:10.5px;color:#303030;top:659.90px;left:831.50px;">0</div>
<div class="t" id="t111" style="font-size:11.0px;color:#303030;top:659.70px;left:915.00px;letter-spacing:0.263px;">Belted Jeans</div>
<div class="bd" style="left:1192.3px;top:662.30px;width:52.7px;height:16px;background:#ffe766"></div>
<div class="t" id="t112" style="font-size:10.3px;color:#4f4700;top:660.60px;left:1199.50px;letter-spacing:0.092px;-webkit-text-stroke:0.15px #4f4700;">4 Issues</div>
<svg style="left:1296.00px;top:651.40px" width="36" height="36" viewBox="0 0 36 36"><circle cx="18" cy="18" r="14.85" fill="none" stroke="#eef3fb" stroke-width="3.7"/><circle cx="18" cy="18" r="14.85" fill="none" stroke="#0a7a56" stroke-width="3.7" stroke-linecap="round" stroke-dasharray="70.91 93.31" transform="rotate(-90 18 18)"/></svg>
<div class="t" id="t113" style="font-size:9.7px;color:#303030;top:659.85px;left:1308.50px;letter-spacing:0.419px;-webkit-text-stroke:0.3px #303030;">76</div>
<div class="t" id="t114" style="font-size:11.3px;color:#303030;top:659.70px;left:1388.50px;letter-spacing:0.202px;">24 Nov, 2025</div>
<svg style="left:1507px;top:660.40px" width="14" height="14" viewBox="0 0 14 14" fill="none" stroke="#6a6a6a" stroke-width="1.100" stroke-linecap="round" stroke-linejoin="round"><path d="M7 2.500 H4.200 a2 2 0 0 0-2 2 v5.300 a2 2 0 0 0 2 2 h5.300 a2 2 0 0 0 2-2 V7.500"/><path d="M6.200 7.800 L11.200 2.300 L12.500 3.500 L7.500 8.800 L5.900 9.200 Z" stroke-width="1"/></svg>
<div class="rl" style="top:691.00px"></div>
<div class="cb" style="left:231px;top:707.00px"></div>
<div class="th" style="top:696.90px"><svg style="left:3.800px;top:0" width="23.400" height="31.400" viewBox="0 0 23.400 31.400"><rect width="23.400" height="31.400" fill="#f7f7f7"/><path d="M12 18 L16 18 L16.500 23.500 L20 26.500 L20 29 L12 29 Z" fill="#26262a"/><path d="M6 19 L10.200 18.500 L10.700 24 L14.200 27 L14.200 29 L5.500 29 Z" fill="#121215"/></svg></div>
<div class="t" id="t115" style="font-size:11.2px;color:#303030;top:703.90px;left:306.70px;letter-spacing:0.145px;-webkit-text-stroke:0.55px #303030;">Ounni Shoe</div>
<svg style="left:585px;top:705.60px" width="14" height="14" viewBox="0 0 14 14" fill="#c4c4c4"><path d="M7.500 2.500 Q8 6.500 12 7.500 Q8 8.500 7.500 12.500 Q7 8.500 3 7.500 Q7 6.500 7.500 2.500 Z"/><path d="M2.800 1.200 Q3 2.800 4.600 3 Q3 3.200 2.800 4.800 Q2.600 3.200 1 3 Q2.600 2.800 2.800 1.200 Z"/></svg>
<svg style="left:604.4px;top:704.00px" width="19.2" height="19.2" viewBox="0 0 18 18" fill="none" stroke="#c4c4c4" stroke-width="1.100" stroke-linejoin="round" stroke-linecap="round"><path d="M11.500 3.500 H3.500 a1.500 1.500 0 0 0-1.500 1.500 v6.500 a1.500 1.500 0 0 0 1.500 1.500 h1.500 v2 l2.500-2 h6.500 a1.500 1.500 0 0 0 1.500-1.500 v-4"/><path d="M9.500 6.800 H12 M9.500 9.300 H12"/><path d="M14.800 1 V4.600 M13 2.800 H16.600" stroke-width="1"/></svg>
<div class="t" style="left:609.500px;top:703.10px;font-size:7.500px;color:#c4c4c4;font-weight:700">?</div>
<svg style="left:627.6px;top:704.20px" width="19.2" height="19.2" viewBox="0 0 18 18" fill="none" stroke="#c4c4c4" stroke-width="1.1" stroke-linejoin="round" stroke-linecap="round"><path d="M12 3.500 H3 a1.500 1.500 0 0 0-1.500 1.500 v7 a1.500 1.500 0 0 0 1.500 1.500 h11 a1.500 1.500 0 0 0 1.500-1.500 v-4.500"/><path d="M4.300 6.800 h3 v1.200 a1.500 1.500 0 0 1-3 0 Z M9.300 7 H12.300 M9.300 9.500 H12.300" stroke-width="1"/><path d="M15 0.800 V4.400 M13.200 2.600 H16.800" stroke="#c4c4c4" stroke-width="1.100"/></svg>
<div class="bd" style="left:706.7px;top:705.60px;width:113.4px;height:16.3px;background:#ffe766"></div>
<svg style="left:711.6px;top:710.50px" width="7" height="7" viewBox="0 0 7 7"><rect x=".6" y=".6" width="5.6" height="5.600" rx="1.600" fill="#e9cf3f" stroke="#8a7a10" stroke-width="1"/><path d="M1.300 1.300 L5.700 5.700" stroke="#8a7a10" stroke-width="1"/></svg>
<div class="t" id="t116" style="font-size:10.3px;color:#554b00;top:704.30px;left:723.00px;letter-spacing:0.195px;-webkit-text-stroke:0.15px #554b00;">Need Improvement</div>
<div class="t" id="t117" style="font-size:10.5px;color:#303030;top:704.10px;left:831.50px;">0</div>
<div class="t" id="t118" style="font-size:11.0px;color:#303030;top:703.90px;left:915.00px;letter-spacing:0.177px;">Ounni Shoe</div>
<div class="bd" style="left:1192.3px;top:706.50px;width:52.7px;height:16px;background:#ffe766"></div>
<div class="t" id="t119" style="font-size:10.3px;color:#4f4700;top:704.80px;left:1199.50px;letter-spacing:0.092px;-webkit-text-stroke:0.15px #4f4700;">5 Issues</div>
<svg style="left:1296.00px;top:695.60px" width="36" height="36" viewBox="0 0 36 36"><circle cx="18" cy="18" r="14.85" fill="none" stroke="#eef3fb" stroke-width="3.7"/><circle cx="18" cy="18" r="14.85" fill="none" stroke="#fbae17" stroke-width="3.7" stroke-linecap="round" stroke-dasharray="69.05 93.31" transform="rotate(-90 18 18)"/></svg>
<div class="t" id="t120" style="font-size:9.7px;color:#303030;top:704.05px;left:1308.50px;letter-spacing:0.419px;-webkit-text-stroke:0.3px #303030;">74</div>
<div class="t" id="t121" style="font-size:11.3px;color:#303030;top:703.90px;left:1388.50px;letter-spacing:0.202px;">24 Nov, 2025</div>
<svg style="left:1507px;top:704.60px" width="14" height="14" viewBox="0 0 14 14" fill="none" stroke="#6a6a6a" stroke-width="1.100" stroke-linecap="round" stroke-linejoin="round"><path d="M7 2.500 H4.200 a2 2 0 0 0-2 2 v5.300 a2 2 0 0 0 2 2 h5.300 a2 2 0 0 0 2-2 V7.500"/><path d="M6.200 7.800 L11.200 2.300 L12.500 3.500 L7.500 8.800 L5.900 9.200 Z" stroke-width="1"/></svg>
<div class="a" style="left:1528.7px;top:579px;width:29px;height:29px;border-radius:15px;background:#1f1f1f"></div>
<svg style="left:1535.2px;top:584.5px" width="17" height="18" viewBox="0 0 17 18"><path d="M8 4 C6 4 4.800 5.500 4.800 7.300 V9.300 C4.800 10.200 4.200 10.800 3.700 11.400 C3.400 11.800 3.600 12.300 4.100 12.300 H11.900 C12.400 12.300 12.600 11.800 12.300 11.400 C11.800 10.800 11.200 10.200 11.200 9.300 V7.300" fill="none" stroke="#fff" stroke-width="1.300" stroke-linecap="round" stroke-linejoin="round"/><path d="M6.700 13.800 Q8 14.900 9.300 13.800" stroke="#fff" stroke-width="1.200" fill="none" stroke-linecap="round"/><circle cx="11.800" cy="4.200" r="2.600" fill="#fff"/></svg>
<div class="a" style="left:1518px;top:613.7px;width:52px;height:52px;border-radius:26px;background:linear-gradient(180deg,rgba(250,214,218,.85) 0%,rgba(236,226,240,.8) 45%,rgba(214,228,250,.85) 100%);-webkit-mask-image:radial-gradient(circle at 50% 50%,#000 0%,#000 52%,rgba(0,0,0,.55) 75%,rgba(0,0,0,0) 100%)"></div>
<svg style="left:1528.400px;top:624.200px" width="31" height="31" viewBox="0 0 31 31"><defs>
<linearGradient id="bg1" x1="0" y1="0" x2="0" y2="1"><stop offset="0" stop-color="#f0685c"/><stop offset=".3" stop-color="#c8587e"/><stop offset=".5" stop-color="#5a58e8"/><stop offset=".75" stop-color="#2a86ff"/><stop offset="1" stop-color="#22b8f0"/></linearGradient>
<radialGradient id="bg2" cx=".8" cy=".85" r=".5"><stop offset="0" stop-color="#22d8c0"/><stop offset="1" stop-color="#22d8c0" stop-opacity="0"/></radialGradient>
<radialGradient id="bg3" cx=".1" cy=".55" r=".4"><stop offset="0" stop-color="#b45af0"/><stop offset="1" stop-color="#b45af0" stop-opacity="0"/></radialGradient></defs>
<circle cx="15.500" cy="15.500" r="15.300" fill="url(#bg1)"/><circle cx="15.500" cy="15.500" r="15.300" fill="url(#bg2)"/><circle cx="15.500" cy="15.500" r="15.300" fill="url(#bg3)"/>
<rect x="2.600" y="8.300" width="25.800" height="11.600" rx="5.800" fill="#14104a"/><rect x="8.200" y="10.800" width="3" height="6.400" rx="1.500" fill="#fff"/><rect x="19.900" y="10.800" width="3" height="6.400" rx="1.500" fill="#fff"/></svg>
<svg style="left:1522.200px;top:671px;filter:drop-shadow(0 2px 3px rgba(0,0,0,.2))" width="45" height="45" viewBox="0 0 45 45"><defs><clipPath id="avc"><circle cx="22.500" cy="22.500" r="22.500"/></clipPath>
<linearGradient id="sky" x1="0" y1="0" x2="0" y2="1"><stop offset="0" stop-color="#8ea0b4"/><stop offset="1" stop-color="#c4c8c8"/></linearGradient></defs>
<g clip-path="url(#avc)"><rect width="45" height="45" fill="url(#sky)"/>
<path d="M0 17 L5 11 L9 14 L14 8.500 L19 13 L24 9 L29 13.500 L35 8 L40 13 L45 11 L45 26 L0 26 Z" fill="#4f4f4c"/>
<path d="M5 11 L7 12.500 L9 14 L11 11.800 L14 8.500 L16 11 L13 12 L10 15 L6 13 Z M35 8 L37.500 11.500 L33 11 Z M24 9 L26 11.500 L22.500 11.500 Z" fill="#b8b8b4"/>
<path d="M0 22 Q10 17 22 21 L30 45 L0 45 Z" fill="#6b5a1e"/><path d="M0 30 Q8 24 18 27 L24 45 L0 45 Z" fill="#7d6a26"/>
<path d="M20 21 Q32 17 45 22 L45 45 L18 45 Z" fill="#2f3a1c"/><path d="M30 26 Q38 23 45 27 L45 45 L28 45 Z" fill="#3f4a24"/>
<g transform="translate(2.200 3.500) scale(.94)"><path d="M17.500 17 Q17 11.500 23 11.500 Q29 11.500 28.500 17 L30 31 L16 31 Z" fill="#c9a060"/>
<ellipse cx="23" cy="17.300" rx="3.300" ry="4.200" fill="#e7c3a0"/><path d="M19.700 16.500 Q20 12.500 23 12.600 Q26 12.500 26.300 16.500 Q24.500 14 23 14.200 Q21.500 14 19.700 16.500 Z" fill="#c9a060"/>
<path d="M13.500 45 Q13 28 19 26 L23 28.500 L27 26 Q33 28 32.500 45 Z" fill="#1f2e26"/><path d="M19 26 Q18 33 19.500 40 L21 40 Q20.500 32 21.500 27.500 Z M27 26 Q28 33 26.500 40 L25 40 Q25.500 32 24.500 27.500 Z" fill="#c9a060"/></g>
</g></svg>
</body></html>
